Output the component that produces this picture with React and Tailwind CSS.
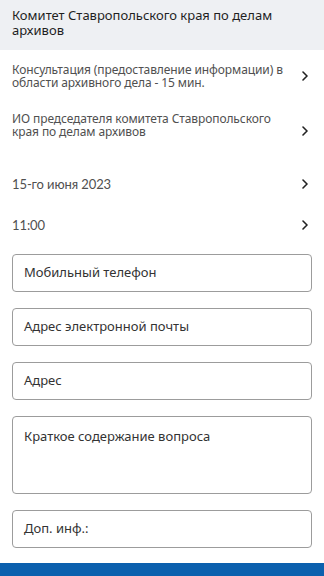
const FONT = { fontFamily: '"Noto Sans", "Open Sans", sans-serif' }

function Chevron({ className = '' }) {
  return (
    <svg viewBox="0 0 6 10" className={`w-[6px] h-[10px] shrink-0 ${className}`} fill="none">
      <path d="M1 1l4 4-4 4" stroke="#222" strokeWidth="1.6" strokeLinecap="round" strokeLinejoin="round" />
    </svg>
  )
}

function PickRow({ children, chevronClass = '', className = '', textClass = 'text-[12px] leading-[13px]' }) {
  return (
    <div className={`flex items-center justify-between pl-3 pr-[16px] ${className}`}>
      <div className={`${textClass} text-[#505050] pr-2 tracking-[-0.1px]`}>{children}</div>
      <Chevron className={chevronClass} />
    </div>
  )
}

function Field({ label, tall }) {
  return (
    <div
      className={`mx-3 border border-[#9c9c9c] rounded-[4px] px-[11px] text-[13px] text-[#333] ${
        tall ? 'h-[78px] pt-[10px]' : 'h-[38px] flex items-center'
      }`}
    >
      {label}
    </div>
  )
}

export default function App() {
  return (
    <div className="w-[324px] h-[576px] bg-white flex flex-col overflow-hidden" style={FONT}>
      {/* Header */}
      <div className="bg-[#eef0f3] h-[50px] px-3 pt-[8px] text-[13px] leading-[15px] text-[#1f1f1f] shrink-0">
        Комитет Ставропольского края по делам архивов
      </div>

      <PickRow className="mt-[13px]">
        Консультация (предоставление информации) в области архивного дела - 15 мин.
      </PickRow>

      <PickRow className="mt-[23px]" chevronClass="mt-[12px]">
        ИО председателя комитета Ставропольского края по делам архивов
      </PickRow>

      <div style={{ fontFamily: 'Lato, "Noto Sans", sans-serif' }}>
        <PickRow className="mt-[39px]" textClass="text-[13px] leading-[14px]">15-го июня 2023</PickRow>
        <PickRow className="mt-[27px]" textClass="text-[13px] leading-[14px]">11:00</PickRow>
      </div>

      <div className="flex flex-col gap-4 mt-[22px]">
        <Field label="Мобильный телефон" />
        <Field label="Адрес электронной почты" />
        <Field label="Адрес" />
        <Field label="Краткое содержание вопроса" tall />
        <Field label="Доп. инф.:" />
      </div>

      <div className="mt-auto h-[13px] bg-[#0b60ae] shrink-0" />
    </div>
  )
}
